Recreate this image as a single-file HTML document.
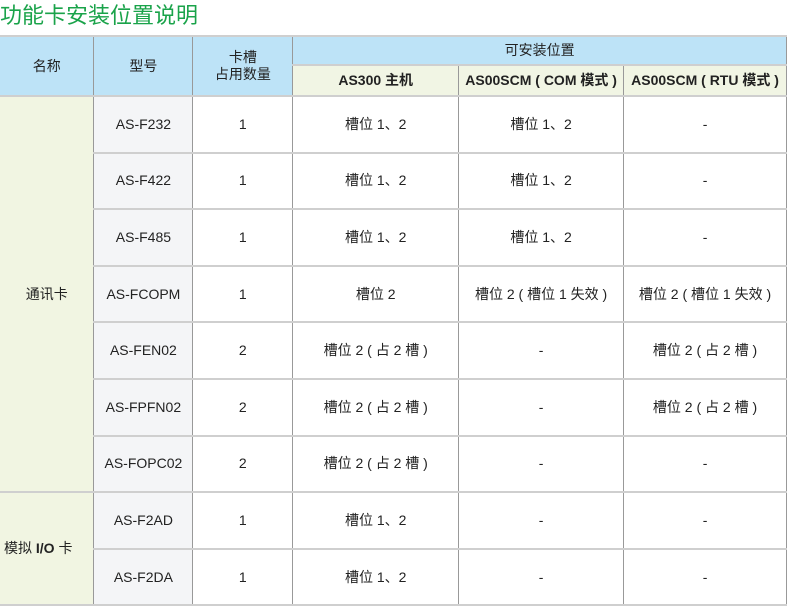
<!DOCTYPE html>
<html><head><meta charset="utf-8"><style>
*{margin:0;padding:0;box-sizing:border-box}
body{width:787px;height:610px;background:#fff;font-family:"Liberation Sans","Noto Sans CJK SC",sans-serif;color:#222;position:relative;overflow:hidden}
h1{position:absolute;left:0;top:-2px;font-size:22px;font-weight:normal;color:#1aa34a}
table{position:absolute;left:0;top:35px;border-collapse:collapse;table-layout:fixed;font-size:14px}
td{text-align:center;vertical-align:middle;border-left:1px solid #999;border-right:1px solid #999;border-top:2px solid #cfcfcf;border-bottom:2px solid #cfcfcf;line-height:17px}
td:first-child{border-left:none}
.h{background:#bde3f7}
.s{background:#f1f5e4;font-weight:bold}
.n{background:#f1f5e2}
.m{background:#f4f5f7}
tr.b td{height:56.6px}
</style></head><body>
<h1>功能卡安装位置说明</h1>
<table>
<colgroup><col style="width:94px"><col style="width:99px"><col style="width:100px"><col style="width:166px"><col style="width:165px"><col style="width:163px"></colgroup>
<tr style="height:29px"><td class="h" rowspan="2">名称</td><td class="h" rowspan="2">型号</td><td class="h" rowspan="2">卡槽<br>占用数量</td><td class="h" colspan="3">可安装位置</td></tr>
<tr style="height:31px"><td class="s">AS300 主机</td><td class="s">AS00SCM ( COM 模式 )</td><td class="s">AS00SCM ( RTU 模式 )</td></tr>
<tr class="b"><td class="n" rowspan="7">通讯卡</td><td class="m">AS-F232</td><td>1</td><td>槽位 1、2</td><td>槽位 1、2</td><td>-</td></tr>
<tr class="b"><td class="m">AS-F422</td><td>1</td><td>槽位 1、2</td><td>槽位 1、2</td><td>-</td></tr>
<tr class="b"><td class="m">AS-F485</td><td>1</td><td>槽位 1、2</td><td>槽位 1、2</td><td>-</td></tr>
<tr class="b"><td class="m">AS-FCOPM</td><td>1</td><td>槽位 2</td><td>槽位 2 ( 槽位 1 失效 )</td><td>槽位 2 ( 槽位 1 失效 )</td></tr>
<tr class="b"><td class="m">AS-FEN02</td><td>2</td><td>槽位 2 ( 占 2 槽 )</td><td>-</td><td>槽位 2 ( 占 2 槽 )</td></tr>
<tr class="b"><td class="m">AS-FPFN02</td><td>2</td><td>槽位 2 ( 占 2 槽 )</td><td>-</td><td>槽位 2 ( 占 2 槽 )</td></tr>
<tr class="b"><td class="m">AS-FOPC02</td><td>2</td><td>槽位 2 ( 占 2 槽 )</td><td>-</td><td>-</td></tr>
<tr class="b"><td class="n" rowspan="2" style="text-align:left;padding-left:4px">模拟 <b>I/O</b> 卡</td><td class="m">AS-F2AD</td><td>1</td><td>槽位 1、2</td><td>-</td><td>-</td></tr>
<tr class="b"><td class="m">AS-F2DA</td><td>1</td><td>槽位 1、2</td><td>-</td><td>-</td></tr>
</table>
</body></html>
